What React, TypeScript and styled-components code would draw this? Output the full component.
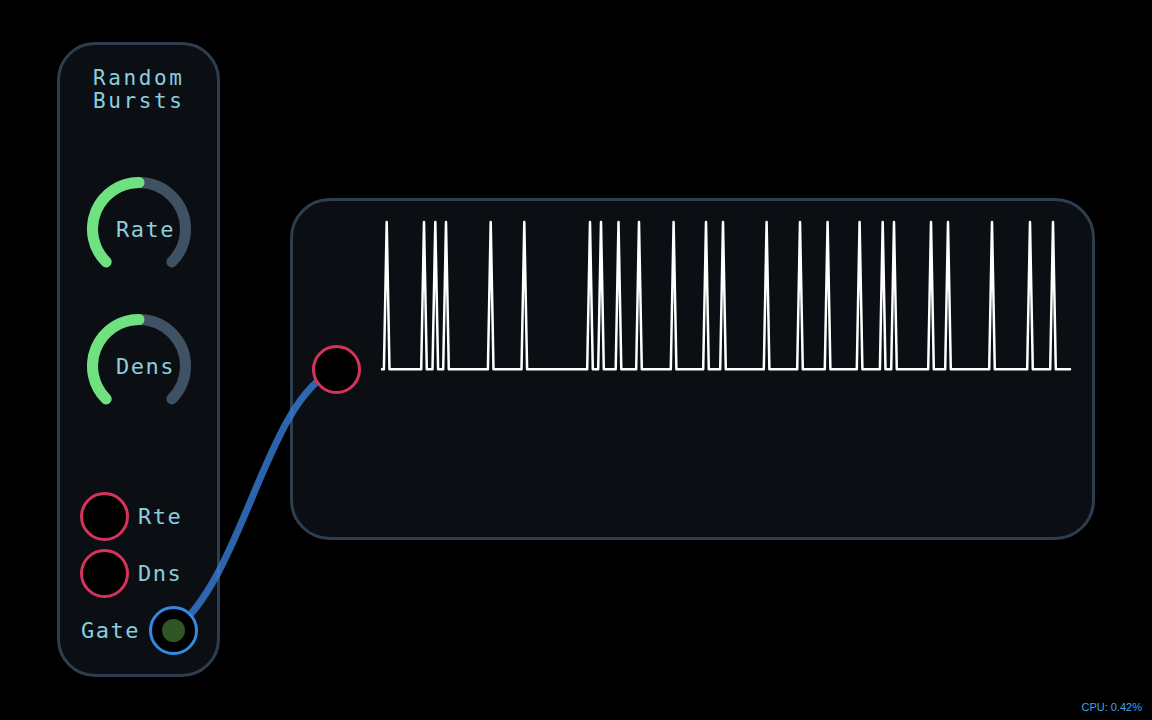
import React from "react";
import styled, { createGlobalStyle } from "styled-components";

const GlobalStyle = createGlobalStyle`
  html, body { margin: 0; padding: 0; background: #000; }
  body { font-family: "DejaVu Sans Mono", monospace; }
`;

const Canvas = styled.div`
  position: relative;
  width: 1152px;
  height: 720px;
  background: #000;
  overflow: hidden;
`;

const Module = styled.div<{ $left: number; $top: number; $w: number; $h: number; $r: number }>`
  position: absolute;
  left: ${(p) => p.$left}px;
  top: ${(p) => p.$top}px;
  width: ${(p) => p.$w}px;
  height: ${(p) => p.$h}px;
  box-sizing: border-box;
  border: 3px solid #2d3e4f;
  border-radius: ${(p) => p.$r}px;
  background: #0b0f13;
`;

const BurstColumn = styled.div`
  display: flex;
  flex-direction: column;
  align-items: center;
  padding-top: 22px;
`;

const Title = styled.div`
  align-self: flex-start;
  margin-left: 33px;
  font-family: "DejaVu Sans Mono", monospace;
  font-size: 21px;
  line-height: 23px;
  letter-spacing: 2.6px;
  color: #8ccddf;
`;

const KnobWrap = styled.div<{ $mt: number }>`
  display: grid;
  width: 104px;
  height: 104px;
  margin-top: ${(p) => p.$mt}px;
  & > * { grid-area: 1 / 1; }
`;

const KnobLabel = styled.div`
  align-self: center;
  justify-self: center;
  padding-left: 14px;
  font-family: "DejaVu Sans Mono", monospace;
  font-size: 22px;
  letter-spacing: 1.5px;
  color: #8ccddf;
`;

const JackRow = styled.div<{ $mt: number; $end?: boolean }>`
  box-sizing: border-box;
  width: 100%;
  display: flex;
  align-items: center;
  justify-content: ${(p) => (p.$end ? "flex-end" : "flex-start")};
  gap: 9px;
  padding: 0 19px 0 20px;
  margin-top: ${(p) => p.$mt}px;
`;

const JackLabel = styled.span`
  font-family: "DejaVu Sans Mono", monospace;
  font-size: 22px;
  letter-spacing: 1.5px;
  color: #8ccddf;
`;

const Jack = styled.div<{ $color: string }>`
  position: relative;
  z-index: 2;
  box-sizing: border-box;
  width: 49px;
  height: 49px;
  flex: none;
  border-radius: 50%;
  border: 3px solid ${(p) => p.$color};
  background: #000;
  display: flex;
  align-items: center;
  justify-content: center;
`;

const JackDot = styled.div`
  width: 23px;
  height: 23px;
  border-radius: 50%;
  background: #2f5524;
`;

const ScopeRow = styled.div`
  display: flex;
  align-items: flex-end;
  gap: 17.5px;
  padding: 15px 0 0 18.5px;
`;

const CableLayer = styled.svg`
  position: absolute;
  left: 0;
  top: 0;
  z-index: 1;
  pointer-events: none;
`;

const Cpu = styled.div`
  position: absolute;
  right: 10px;
  bottom: 7px;
  font-family: "Liberation Sans", Arial, sans-serif;
  font-size: 11px;
  color: #3fa6ec;
`;

const R = 46.5;
const C = 52;
const pt = (deg: number) => {
  const a = (deg * Math.PI) / 180;
  return [C + R * Math.sin(a), C - R * Math.cos(a)];
};

function Knob({ label, value, mt }: { label: string; value: number; mt: number }) {
  const [sx, sy] = pt(-135);
  const [ex, ey] = pt(135);
  const endDeg = -135 + 270 * value;
  const [vx, vy] = pt(endDeg);
  const large = 270 * value > 180 ? 1 : 0;
  return (
    <KnobWrap $mt={mt}>
      <svg width={104} height={104} viewBox="0 0 104 104">
        <path
          d={`M${sx} ${sy} A${R} ${R} 0 1 1 ${ex} ${ey}`}
          fill="none"
          stroke="#3f5263"
          strokeWidth={11}
          strokeLinecap="round"
        />
        <path
          d={`M${sx} ${sy} A${R} ${R} 0 ${large} 1 ${vx} ${vy}`}
          fill="none"
          stroke="#6fe27f"
          strokeWidth={11}
          strokeLinecap="round"
        />
      </svg>
      <KnobLabel>{label}</KnobLabel>
    </KnobWrap>
  );
}

const spikes = [
  386.7, 424, 435.3, 446, 490.7, 524.3, 590, 601, 618.5, 639, 673.6, 706, 723, 766.6, 800,
  827.6, 859.6, 882.7, 894, 931, 948, 992, 1030, 1053,
];

function Scope() {
  const ox = 378;
  const base = 153.3;
  const top = 6;
  const pts: string[] = [`4,${base}`];
  spikes.forEach((x) => {
    const s = x - ox;
    pts.push(`${s - 2.8},${base}`, `${s},${top}`, `${s + 2.8},${base}`);
  });
  pts.push(`692,${base}`);
  return (
    <svg width={696} height={178} viewBox="0 0 696 178">
      <polyline
        points={pts.join(" ")}
        fill="none"
        stroke="#ffffff"
        strokeWidth={2.5}
        strokeLinejoin="round"
        strokeLinecap="round"
      />
    </svg>
  );
}

export default function App() {
  return (
    <>
      <GlobalStyle />
      <Canvas>
        <Module $left={57} $top={42} $w={163} $h={635} $r={38}>
          <BurstColumn>
            <Title>
              Random
              <br />
              Bursts
            </Title>
            <Knob label="Rate" value={0.5} mt={64} />
            <Knob label="Dens" value={0.5} mt={33} />
            <JackRow $mt={73.5}>
              <Jack $color="#d6335c" />
              <JackLabel>Rte</JackLabel>
            </JackRow>
            <JackRow $mt={8.5}>
              <Jack $color="#d6335c" />
              <JackLabel>Dns</JackLabel>
            </JackRow>
            <JackRow $mt={8} $end>
              <JackLabel>Gate</JackLabel>
              <Jack $color="#3589e4">
                <JackDot />
              </Jack>
            </JackRow>
          </BurstColumn>
        </Module>
        <Module $left={290} $top={198} $w={805} $h={342} $r={40}>
          <ScopeRow>
            <Jack $color="#d6335c" />
            <Scope />
          </ScopeRow>
        </Module>
        <CableLayer width={1152} height={720} viewBox="0 0 1152 720">
          <path
            d="M173.5 631 C245 575, 265 400, 336 369"
            fill="none"
            stroke="rgba(56,128,220,0.78)"
            strokeWidth={7}
            strokeLinecap="round"
          />
        </CableLayer>
        <Cpu>CPU: 0.42%</Cpu>
      </Canvas>
    </>
  );
}
